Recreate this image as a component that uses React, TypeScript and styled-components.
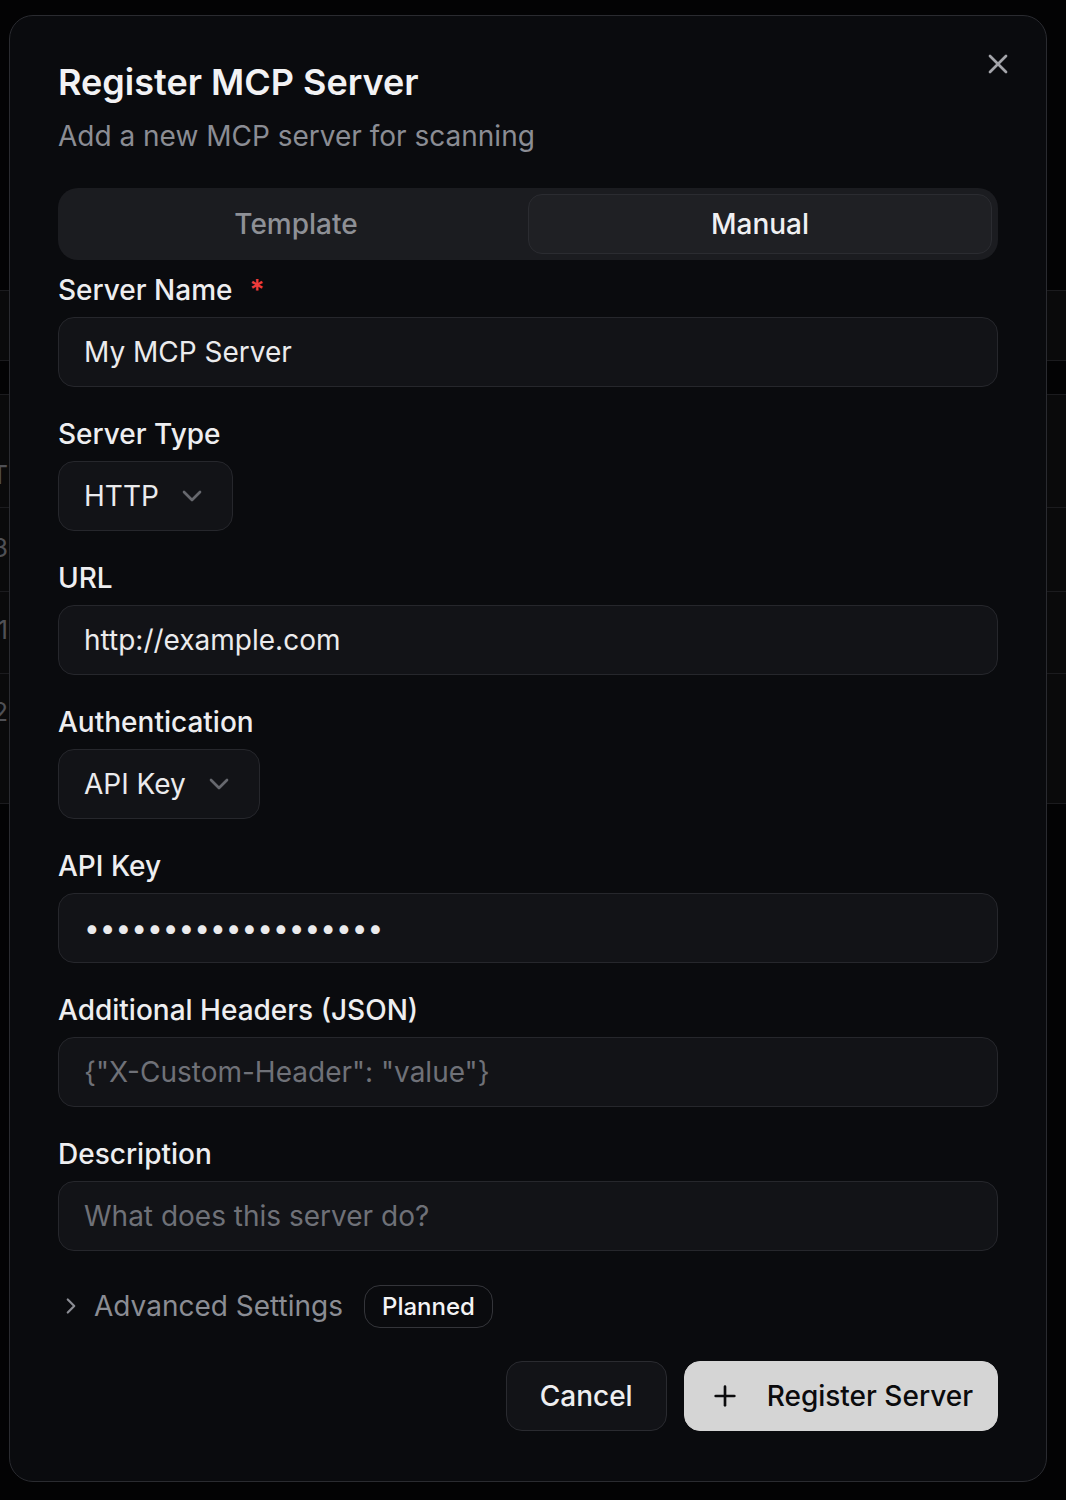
import React from "react";
import styled, { createGlobalStyle } from "styled-components";
import { X, ChevronDown, ChevronRight, Plus } from "lucide-react";

const GlobalStyle = createGlobalStyle`
  * { box-sizing: border-box; }
  html, body { margin: 0; padding: 0; background: #030304; }
  body {
    font-family: Inter, "Noto Sans", "Liberation Sans", sans-serif;
    -webkit-font-smoothing: antialiased;
    overflow: hidden;
  }
`;

/* ---------- dimmed page behind the dialog ---------- */
const Page = styled.div`
  height: 1500px;
  display: flex;
  flex-direction: column;
  padding-top: 290px;
  background: #030304;
`;

const FilterBar = styled.div`
  height: 71px;
  background: #0a0a0b;
  border-top: 1px solid #1b1b1e;
  border-bottom: 1px solid #1b1b1e;
`;

const Table = styled.div`
  margin-top: 33px;
  background: #0a0a0b;
  border-top: 1px solid #1b1b1e;
  display: flex;
  flex-direction: column;
`;

const TableRow = styled.div<{ $h: number; $pad: number }>`
  height: ${(p) => p.$h}px;
  padding-top: ${(p) => p.$pad}px;
  border-bottom: 1px solid #1b1b1e;
  display: flex;
  align-items: flex-start;
`;

const EdgeCell = styled.span`
  width: 20px;
  margin-left: -12px;
  text-align: right;
  color: #4f5055;
  font-size: 26px;
  line-height: 30px;
`;

/* ---------- dialog ---------- */
const Overlay = styled.div`
  position: fixed;
  inset: 0;
  display: flex;
  align-items: flex-start;
  padding: 15px 0 0 9px;
`;

const Dialog = styled.div`
  position: relative;
  width: 1038px;
  background: #0a0b0e;
  border: 1px solid #2a2b30;
  border-radius: 24px;
  padding: 48px 48px 50px;
  display: flex;
  flex-direction: column;
  gap: 32px;
`;

const CloseButton = styled.button`
  position: absolute;
  top: 32px;
  right: 32px;
  width: 32px;
  height: 32px;
  padding: 0;
  border: none;
  background: transparent;
  color: #a4a5aa;
  display: flex;
  align-items: center;
  justify-content: center;
  cursor: pointer;
`;

const Header = styled.div`
  display: flex;
  flex-direction: column;
  gap: 16px;
`;

const Title = styled.h2`
  margin: 0;
  font-size: 36px;
  line-height: 36px;
  font-weight: 600;
  color: #f2f2f4;
`;

const Subtitle = styled.p`
  margin: 0;
  font-size: 28px;
  line-height: 40px;
  color: #8b8d94;
`;

const TabsRoot = styled.div`
  display: flex;
  flex-direction: column;
  gap: 16px;
`;

const TabsList = styled.div`
  height: 72px;
  padding: 6px;
  border-radius: 20px;
  background: #1b1c20;
  display: grid;
  grid-template-columns: 1fr 1fr;
`;

const TabTrigger = styled.button<{ $active?: boolean }>`
  height: 60px;
  border-radius: 14px;
  border: 1px solid ${(p) => (p.$active ? "#2b2c31" : "transparent")};
  background: ${(p) => (p.$active ? "#1f2024" : "transparent")};
  color: ${(p) => (p.$active ? "#f0f0f2" : "#8e9096")};
  font-family: inherit;
  font-size: 28px;
  font-weight: 500;
  display: flex;
  align-items: center;
  justify-content: center;
  cursor: pointer;
`;

const Panel = styled.div`
  display: flex;
  flex-direction: column;
  gap: 33px;
`;

const Field = styled.div`
  display: flex;
  flex-direction: column;
  align-items: flex-start;
  gap: 13px;
`;

const Label = styled.label`
  display: flex;
  align-items: center;
  gap: 17px;
  font-size: 28px;
  line-height: 28px;
  font-weight: 500;
  color: #eeeef0;
`;

const Required = styled.span`
  color: #ef3b3b;
  font-size: 28px;
  font-weight: 600;
`;

const TextInput = styled.input`
  width: 100%;
  height: 70px;
  padding: 0 25px;
  border: 1px solid #26272c;
  border-radius: 16px;
  background: #121317;
  color: #ebebed;
  font-family: inherit;
  font-size: 28px;
  outline: none;

  &::placeholder {
    color: #6f7178;
  }
`;

const SelectTrigger = styled.button`
  height: 70px;
  padding: 0 24px 0 25px;
  border: 1px solid #26272c;
  border-radius: 16px;
  background: #121317;
  color: #ebebed;
  font-family: inherit;
  font-size: 28px;
  display: inline-flex;
  align-items: center;
  gap: 17px;
  cursor: pointer;

  svg {
    color: #66686e;
  }
`;

const AdvancedRow = styled.div`
  height: 44px;
  display: flex;
  align-items: center;
`;

const AdvancedToggle = styled.button`
  padding: 0;
  border: none;
  background: transparent;
  color: #8b8d94;
  font-family: inherit;
  font-size: 28px;
  display: flex;
  align-items: center;
  gap: 10px;
  cursor: pointer;
`;

const Badge = styled.span`
  margin-left: 21px;
  height: 43px;
  padding: 0 17px;
  border: 1px solid #34353a;
  border-radius: 16px;
  display: inline-flex;
  align-items: center;
  font-size: 24px;
  font-weight: 500;
  color: #f4f4f5;
`;

const Footer = styled.div`
  display: flex;
  justify-content: flex-end;
  gap: 17px;
`;

const Button = styled.button<{ $primary?: boolean }>`
  height: 70px;
  padding: 0 ${(p) => (p.$primary ? "24px" : "33px")};
  border-radius: 16px;
  border: 1px solid ${(p) => (p.$primary ? "#d5d5d5" : "#2a2b30")};
  background: ${(p) => (p.$primary ? "#d5d5d5" : "#121317")};
  color: ${(p) => (p.$primary ? "#0b0b0d" : "#eeeef0")};
  font-family: inherit;
  font-size: 28px;
  font-weight: 500;
  display: inline-flex;
  align-items: center;
  gap: 26px;
  cursor: pointer;
`;

const bgRows = [
  { h: 113, pad: 65, t: "T" },
  { h: 84, pad: 25, t: "3" },
  { h: 82, pad: 23, t: "1" },
  { h: 130, pad: 23, t: "2" },
];

export default function App() {
  return (
    <>
      <GlobalStyle />
      <Page>
        <FilterBar />
        <Table>
          {bgRows.map((r, i) => (
            <TableRow key={i} $h={r.h} $pad={r.pad}>
              <EdgeCell>{r.t}</EdgeCell>
            </TableRow>
          ))}
        </Table>
      </Page>

      <Overlay>
        <Dialog role="dialog" aria-labelledby="dlg-title">
          <CloseButton aria-label="Close">
            <X size={32} strokeWidth={2} />
          </CloseButton>

          <Header>
            <Title id="dlg-title">Register MCP Server</Title>
            <Subtitle>Add a new MCP server for scanning</Subtitle>
          </Header>

          <TabsRoot>
            <TabsList>
              <TabTrigger>Template</TabTrigger>
              <TabTrigger $active>Manual</TabTrigger>
            </TabsList>

            <Panel>
              <Field>
                <Label>
                  Server Name <Required>*</Required>
                </Label>
                <TextInput defaultValue="My MCP Server" />
              </Field>

              <Field>
                <Label>Server Type</Label>
                <SelectTrigger>
                  HTTP
                  <ChevronDown size={32} strokeWidth={2} />
                </SelectTrigger>
              </Field>

              <Field>
                <Label>URL</Label>
                <TextInput defaultValue="http://example.com" />
              </Field>

              <Field>
                <Label>Authentication</Label>
                <SelectTrigger>
                  API Key
                  <ChevronDown size={32} strokeWidth={2} />
                </SelectTrigger>
              </Field>

              <Field>
                <Label>API Key</Label>
                <TextInput type="password" defaultValue="sk-abcdefghijklmnop" />
              </Field>

              <Field>
                <Label>Additional Headers (JSON)</Label>
                <TextInput placeholder={'{"X-Custom-Header": "value"}'} />
              </Field>

              <Field>
                <Label>Description</Label>
                <TextInput placeholder="What does this server do?" />
              </Field>

              <AdvancedRow>
                <AdvancedToggle>
                  <ChevronRight size={26} strokeWidth={2} />
                  Advanced Settings
                </AdvancedToggle>
                <Badge>Planned</Badge>
              </AdvancedRow>

              <Footer>
                <Button>Cancel</Button>
                <Button $primary>
                  <Plus size={32} strokeWidth={2} />
                  Register Server
                </Button>
              </Footer>
            </Panel>
          </TabsRoot>
        </Dialog>
      </Overlay>
    </>
  );
}
